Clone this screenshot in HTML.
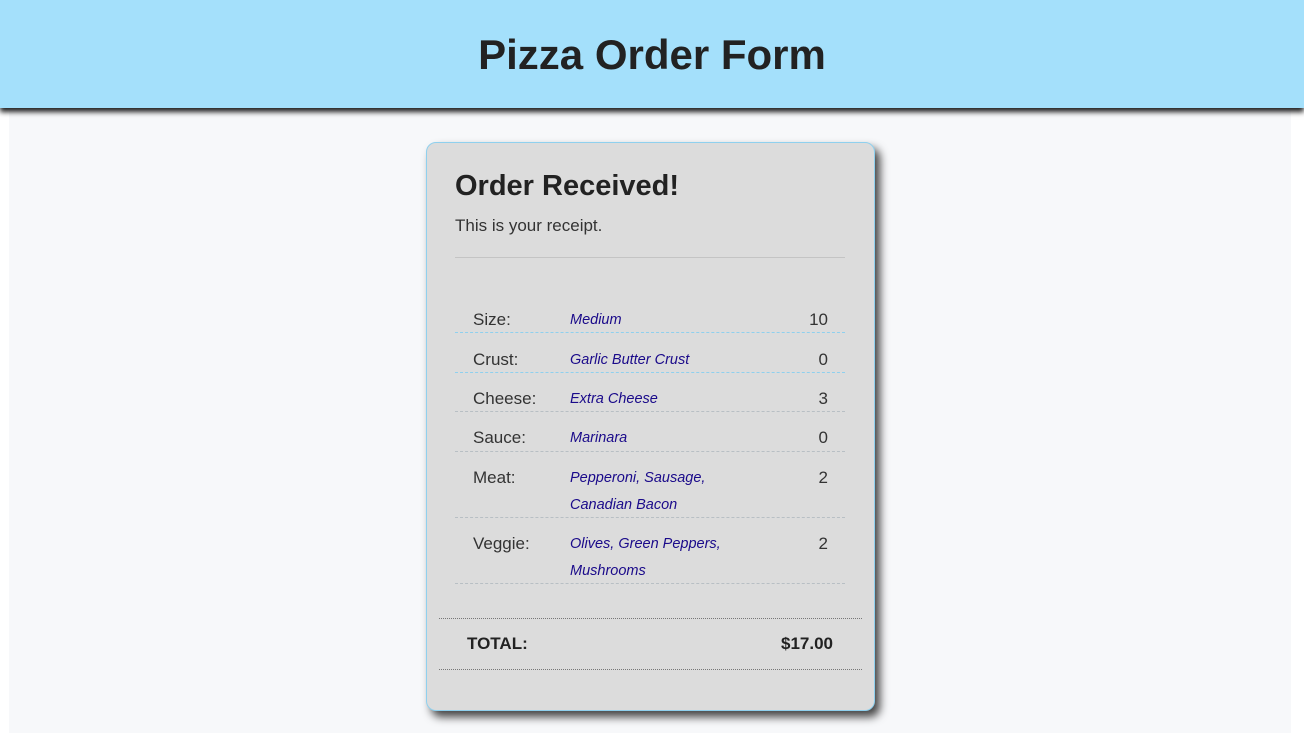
<!DOCTYPE html>
<html><head><style>
*{margin:0;padding:0;box-sizing:border-box}
body{width:1304px;height:733px;background:#fff;font-family:"Liberation Sans",sans-serif;color:#212529;position:relative;overflow:hidden}
.hdr{position:absolute;left:0;top:0;width:1304px;height:108px;background:#a4e0fb;box-shadow:0 4px 5px #222;z-index:2;text-align:center}
.hdr h1{font-size:42px;font-weight:bold;line-height:110px;color:#222}
.main{position:absolute;left:9px;top:108px;width:1282px;height:625px;background:#f7f8fa}
.card{position:absolute;left:426px;top:142px;width:449px;height:569px;background:#dcdcdc;border:1px solid #8fd0ee;border-radius:10px;box-shadow:5px 6px 9px #444}
.a{position:absolute;white-space:nowrap}
.lbl{font-size:17px;color:#333}
.val{font-size:14.5px;font-style:italic;color:#1a0a8a}
.num{font-size:17px;color:#333;text-align:right;width:60px}
.ln{position:absolute;left:455px;width:390px;border-top:1px dashed #8fd0ee}
.ln2{position:absolute;left:455px;width:390px;border-top:1px dashed #b8bfc4}
.dot{position:absolute;left:439px;width:423px;border-top:1px dotted #777}
</style></head><body>
<div class="hdr"><h1>Pizza Order Form</h1></div>
<div class="main"></div>
<div class="card"></div>
<div class="a" style="left:455px;top:170px;font-size:29px;font-weight:bold;color:#222">Order Received!</div>
<div class="a" style="left:455px;top:216px;font-size:17px;color:#333">This is your receipt.</div>
<div style="position:absolute;left:455px;top:257px;width:390px;border-top:1px solid #c4c4c4"></div>

<div class="a lbl" style="left:473px;top:310px">Size:</div><div class="a val" style="left:570px;top:312px">Medium</div><div class="a num" style="left:768px;top:310px">10</div>
<div class="ln" style="top:332px"></div>
<div class="a lbl" style="left:473px;top:350px">Crust:</div><div class="a val" style="left:570px;top:352px">Garlic Butter Crust</div><div class="a num" style="left:768px;top:350px">0</div>
<div class="ln" style="top:372px"></div>
<div class="a lbl" style="left:473px;top:389px">Cheese:</div><div class="a val" style="left:570px;top:391px">Extra Cheese</div><div class="a num" style="left:768px;top:389px">3</div>
<div class="ln2" style="top:411px"></div>
<div class="a lbl" style="left:473px;top:428px">Sauce:</div><div class="a val" style="left:570px;top:430px">Marinara</div><div class="a num" style="left:768px;top:428px">0</div>
<div class="ln2" style="top:451px"></div>
<div class="a lbl" style="left:473px;top:468px">Meat:</div><div class="a val" style="left:570px;top:470px">Pepperoni, Sausage,</div><div class="a val" style="left:570px;top:497px">Canadian Bacon</div><div class="a num" style="left:768px;top:468px">2</div>
<div class="ln2" style="top:517px"></div>
<div class="a lbl" style="left:473px;top:534px">Veggie:</div><div class="a val" style="left:570px;top:536px">Olives, Green Peppers,</div><div class="a val" style="left:570px;top:563px">Mushrooms</div><div class="a num" style="left:768px;top:534px">2</div>
<div class="ln2" style="top:583px"></div>

<div class="dot" style="top:618px"></div>
<div class="a" style="left:467px;top:634px;font-size:17px;font-weight:bold;color:#222">TOTAL:</div>
<div class="a" style="left:733px;top:634px;width:100px;text-align:right;font-size:17px;font-weight:bold;color:#222">$17.00</div>
<div class="dot" style="top:669px"></div>
</body></html>
